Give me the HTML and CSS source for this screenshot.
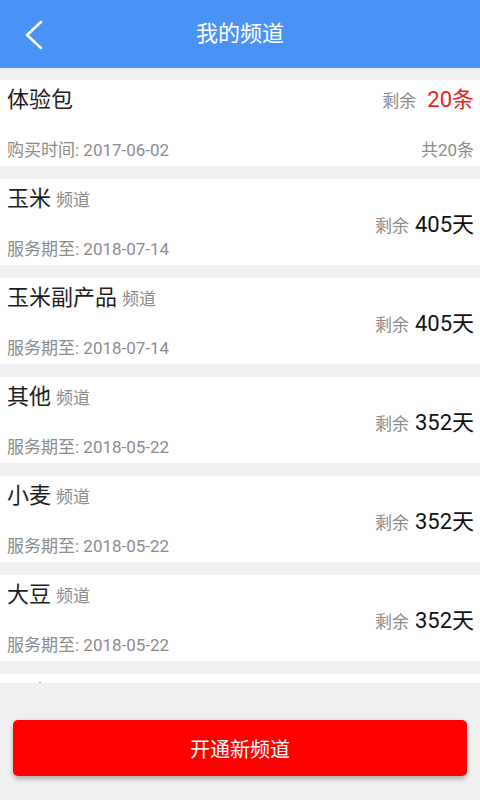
FILE: index.html
```html
<!DOCTYPE html>
<html lang="zh-CN">
<head>
<meta charset="utf-8">
<title>我的频道</title>
<link rel="stylesheet" href="styles.css">
</head>
<body>
<header class="topbar">
  <span class="back">
    <svg width="20" height="30" viewBox="0 0 20 30"><path d="M17 2 L3 15 L17 28" fill="none" stroke="#fff" stroke-width="2.6" stroke-linecap="round" stroke-linejoin="round"/></svg>
  </span>
  <h1 class="title">我的频道</h1>
</header>
<main class="list">
  <section class="card">
    <div class="name">体验包</div>
    <div class="remain top"><span class="label">剩余</span><span class="num red">20条</span></div>
    <div class="date">购买时间: 2017-06-02</div>
    <div class="total">共20条</div>
  </section>
  <section class="card">
    <div class="name">玉米<span class="tag">频道</span></div>
    <div class="remain span"><span class="label">剩余</span><span class="num">405天</span></div>
    <div class="date">服务期至: 2018-07-14</div>
  </section>
  <section class="card">
    <div class="name">玉米副产品<span class="tag">频道</span></div>
    <div class="remain span"><span class="label">剩余</span><span class="num">405天</span></div>
    <div class="date">服务期至: 2018-07-14</div>
  </section>
  <section class="card">
    <div class="name">其他<span class="tag">频道</span></div>
    <div class="remain span"><span class="label">剩余</span><span class="num">352天</span></div>
    <div class="date">服务期至: 2018-05-22</div>
  </section>
  <section class="card">
    <div class="name">小麦<span class="tag">频道</span></div>
    <div class="remain span"><span class="label">剩余</span><span class="num">352天</span></div>
    <div class="date">服务期至: 2018-05-22</div>
  </section>
  <section class="card">
    <div class="name">大豆<span class="tag">频道</span></div>
    <div class="remain span"><span class="label">剩余</span><span class="num">352天</span></div>
    <div class="date">服务期至: 2018-05-22</div>
  </section>
  <section class="card">
    <div class="name">玉米<span class="tag">频道</span></div>
    <div class="remain span"><span class="label">剩余</span><span class="num">352天</span></div>
    <div class="date">服务期至: 2018-05-22</div>
  </section>
</main>
<footer class="footer">
  <button class="open-btn">开通新频道</button>
</footer>
</body>
</html>
```
FILE: styles.css
```css
* { box-sizing: border-box; }
html, body { margin: 0; padding: 0; }
body {
  width: 480px;
  height: 800px;
  overflow: hidden;
  background: #f0f0f0;
  font-family: Roboto, "Noto Sans CJK SC", sans-serif;
  color: #222;
}
.topbar {
  height: 68px;
  background: #4a93f6;
  display: flex;
  align-items: center;
  justify-content: center;
  position: relative;
}
.back {
  position: absolute;
  left: 24px;
  top: 20px;
  display: block;
  line-height: 0;
}
.title {
  margin: 0;
  font-size: 22px;
  font-weight: 400;
  color: #fff;
  line-height: 1;
}
.list {
  padding-top: 12px;
  display: flex;
  flex-direction: column;
  gap: 13px;
}
.card {
  background: #fff;
  height: 86px;
  padding: 0 6px 0 7px;
  display: grid;
  grid-template-columns: 1fr auto;
  grid-template-rows: 40px 32px;
  row-gap: 14px;
}
.name {
  font-size: 22px;
  line-height: 40px;
  color: #1e1e1e;
  white-space: nowrap;
}
.tag {
  font-size: 17px;
  color: #8c8c8c;
  margin-left: 5px;
}
.date {
  grid-column: 1;
  grid-row: 2;
  font-size: 17px;
  line-height: 32px;
  color: #8c8c8c;
  white-space: nowrap;
}
.remain {
  grid-column: 2;
  display: flex;
  align-items: baseline;
  justify-content: flex-end;
  white-space: nowrap;
}
.remain.top {
  grid-row: 1;
  line-height: 40px;
}
.remain.span {
  grid-row: 1 / 3;
  align-self: center;
  padding-top: 6px;
  line-height: 32px;
}
.label {
  font-size: 17px;
  color: #8c8c8c;
}
.num {
  font-size: 22px;
  color: #111;
  margin-left: 6px;
}
.num.red {
  color: #e62424;
  margin-left: 11px;
}
.total {
  grid-column: 2;
  grid-row: 2;
  font-size: 17px;
  line-height: 32px;
  color: #8c8c8c;
  text-align: right;
}
.footer {
  position: fixed;
  left: 0;
  right: 0;
  bottom: 0;
  height: 117px;
  background: #f0f0f0;
  padding: 37px 13px 0;
}
.open-btn {
  display: block;
  width: 100%;
  height: 56px;
  border: none;
  border-radius: 5px;
  background: #ff0000;
  color: #fff;
  font-family: Roboto, "Noto Sans CJK SC", sans-serif;
  font-size: 20px;
  box-shadow: 0 3px 5px rgba(0, 0, 0, 0.28);
  padding: 0;
}
```
